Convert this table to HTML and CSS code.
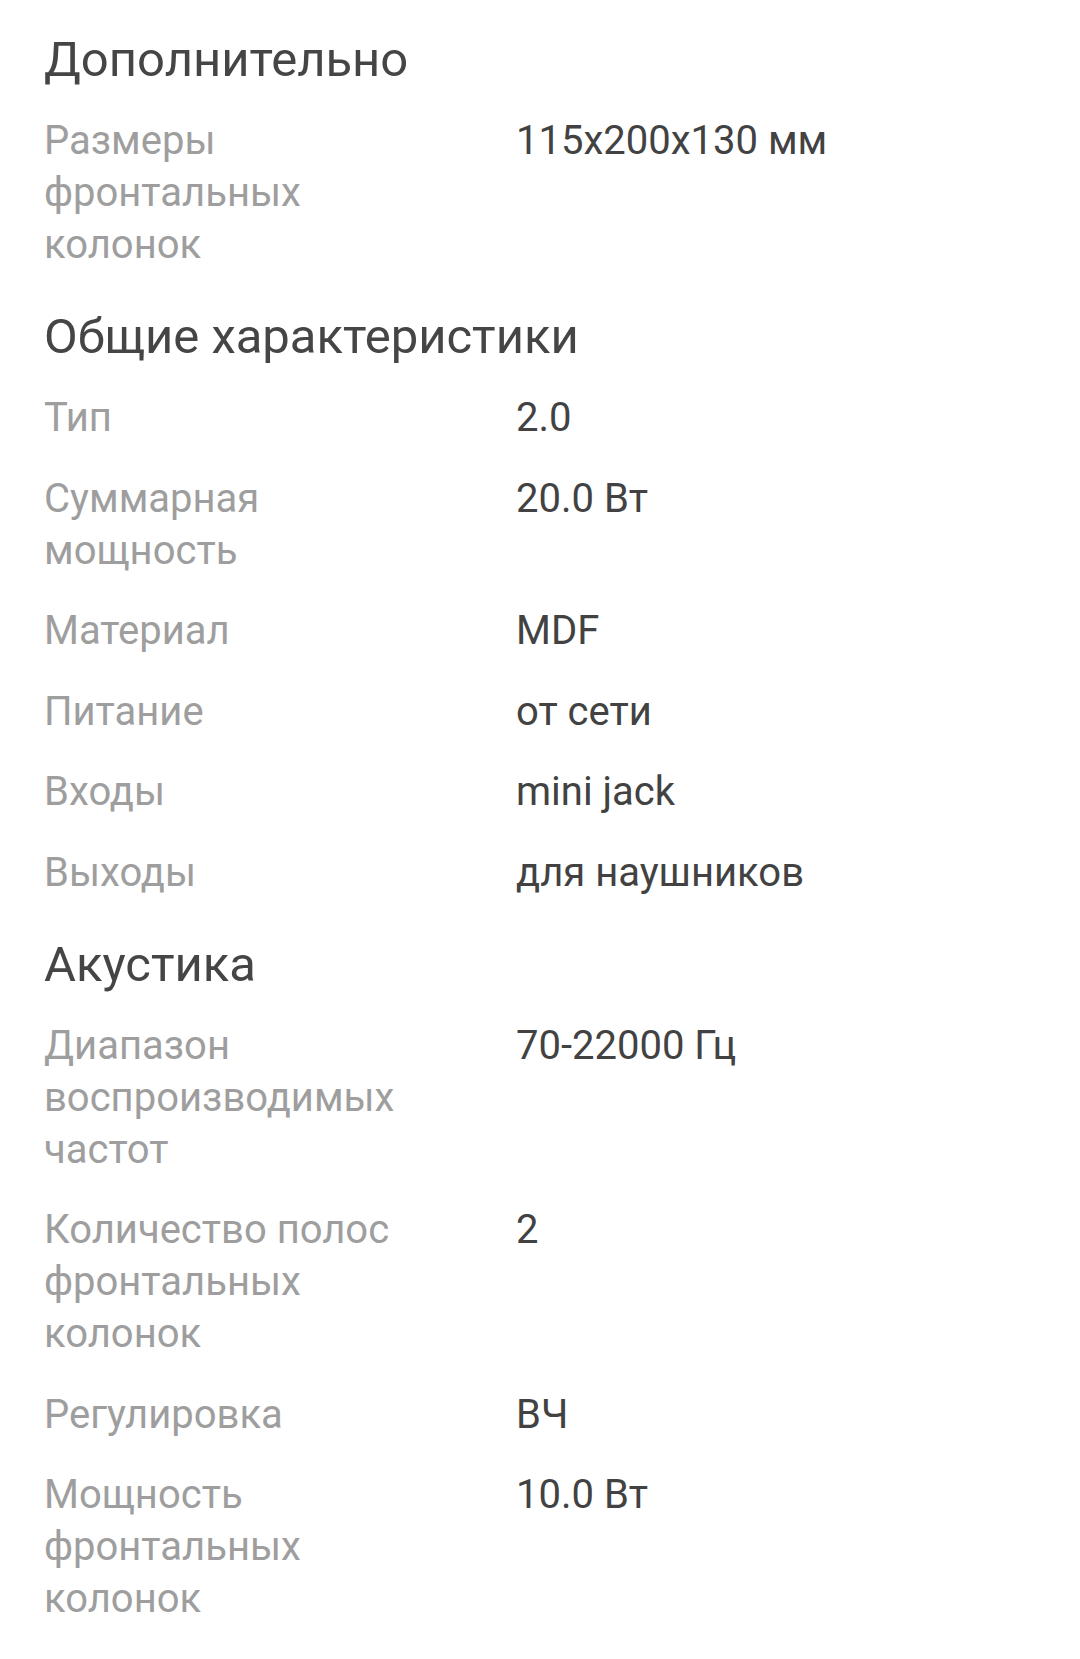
FILE: index.html
```html
<!DOCTYPE html>
<html lang="ru">
<head>
<meta charset="utf-8">
<title>Характеристики</title>
<link rel="stylesheet" href="styles.css">
</head>
<body>
<main class="specs">
  <section class="section">
    <h2 class="section-title">Дополнительно</h2>
    <dl class="rows">
      <div class="row"><dt class="label">Размеры фронтальных колонок</dt><dd class="value">115x200x130 мм</dd></div>
    </dl>
  </section>
  <section class="section">
    <h2 class="section-title">Общие характеристики</h2>
    <dl class="rows">
      <div class="row"><dt class="label">Тип</dt><dd class="value">2.0</dd></div>
      <div class="row"><dt class="label">Суммарная мощность</dt><dd class="value">20.0 Вт</dd></div>
      <div class="row"><dt class="label">Материал</dt><dd class="value">MDF</dd></div>
      <div class="row"><dt class="label">Питание</dt><dd class="value">от сети</dd></div>
      <div class="row"><dt class="label">Входы</dt><dd class="value">mini jack</dd></div>
      <div class="row"><dt class="label">Выходы</dt><dd class="value">для наушников</dd></div>
    </dl>
  </section>
  <section class="section">
    <h2 class="section-title">Акустика</h2>
    <dl class="rows">
      <div class="row"><dt class="label">Диапазон воспроизводимых частот</dt><dd class="value">70-22000 Гц</dd></div>
      <div class="row"><dt class="label">Количество полос фронтальных колонок</dt><dd class="value">2</dd></div>
      <div class="row"><dt class="label">Регулировка</dt><dd class="value">ВЧ</dd></div>
      <div class="row"><dt class="label">Мощность фронтальных колонок</dt><dd class="value">10.0 Вт</dd></div>
    </dl>
  </section>
</main>
</body>
</html>
```

FILE: styles.css
```css
html, body {
  margin: 0;
  padding: 0;
  background: #ffffff;
}

body {
  font-family: Roboto, "Noto Sans", "Liberation Sans", sans-serif;
  -webkit-font-smoothing: antialiased;
}

.specs {
  display: flex;
  flex-direction: column;
  gap: 36px;
  padding: 30px 44px 40px 44px;
}

.section {
  display: flex;
  flex-direction: column;
  gap: 25px;
}

.section-title {
  margin: 0;
  font-size: 49px;
  line-height: 60px;
  font-weight: 400;
  color: #454545;
}

.rows {
  margin: 0;
  display: flex;
  flex-direction: column;
  gap: 28.5px;
}

.row {
  display: grid;
  grid-template-columns: 400px 1fr;
  column-gap: 72px;
  font-size: 40px;
  line-height: 52px;
}

.label {
  margin: 0;
  color: #9e9e9e;
}

.value {
  margin: 0;
  color: #424242;
}
```
